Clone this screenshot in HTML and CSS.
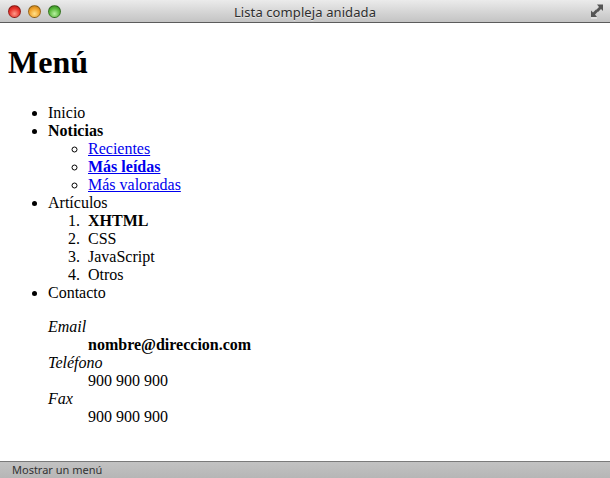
FILE: index.html
```html
<!DOCTYPE html>
<html lang="es">
<head>
<meta charset="utf-8">
<title>Lista compleja anidada</title>
<link rel="stylesheet" href="styles.css">
</head>
<body>
<div class="window">
  <div class="titlebar">
    <div class="lights">
      <span class="light red"></span>
      <span class="light yellow"></span>
      <span class="light green"></span>
    </div>
    <div class="title">Lista compleja anidada</div>
    <svg class="resize" width="14" height="16" viewBox="0 0 14 16">
      <path d="M13 1.5 L13 8 L11 6 L8 9 L6 7 L9 4 L7 1.5 Z" fill="#555"/>
      <path d="M1 14 L1 7.5 L3 9.5 L6 6.5 L8 8.5 L5 11.5 L7 14 Z" fill="#555"/>
      <path d="M1 15 L7 15" stroke="#f4f4f4" stroke-width="1"/>
    </svg>
  </div>
  <div class="content">
    <div class="page">
      <h1>Menú</h1>
      <ul>
        <li>Inicio</li>
        <li><strong>Noticias</strong>
          <ul>
            <li><a href="#">Recientes</a></li>
            <li><a href="#"><strong>Más leídas</strong></a></li>
            <li><a href="#">Más valoradas</a></li>
          </ul>
        </li>
        <li>Artículos
          <ol>
            <li><strong>XHTML</strong></li>
            <li>CSS</li>
            <li>JavaScript</li>
            <li>Otros</li>
          </ol>
        </li>
        <li>Contacto
          <dl>
            <dt><em>Email</em></dt>
            <dd><strong>nombre@direccion.com</strong></dd>
            <dt><em>Teléfono</em></dt>
            <dd>900 900 900</dd>
            <dt><em>Fax</em></dt>
            <dd>900 900 900</dd>
          </dl>
        </li>
      </ul>
    </div>
  </div>
  <div class="statusbar">Mostrar un menú</div>
</div>
</body>
</html>
```
FILE: styles.css
```css
html, body {
  margin: 0;
  padding: 0;
}
body {
  width: 610px;
  height: 478px;
  overflow: hidden;
}
.window {
  display: flex;
  flex-direction: column;
  width: 610px;
  height: 478px;
  background: #fff;
}
.titlebar {
  position: relative;
  flex: 0 0 22px;
  display: flex;
  align-items: center;
  justify-content: center;
  background: linear-gradient(#ebebeb, #d3d3d3 60%, #c4c4c4);
  border-bottom: 1px solid #5c5c5c;
}
.lights {
  position: absolute;
  left: 8px;
  top: 5px;
  display: flex;
  gap: 7px;
}
.light {
  width: 13px;
  height: 13px;
  border-radius: 50%;
  box-sizing: border-box;
  border: 1px solid rgba(0,0,0,0.35);
}
.red {
  background: radial-gradient(circle at 50% 70%, #ff9a8a 0, #e8322a 55%, #a8140e 100%);
}
.yellow {
  background: radial-gradient(circle at 50% 70%, #ffe08a 0, #f0a22a 55%, #b0700e 100%);
}
.green {
  background: radial-gradient(circle at 50% 70%, #b8f0a0 0, #58b83a 55%, #2a7818 100%);
}
.title {
  font-family: "Noto Sans", "DejaVu Sans", sans-serif;
  font-size: 13px;
  color: #2e2e2e;
  letter-spacing: 0.1px;
  text-shadow: 0 1px 0 rgba(255,255,255,0.5);
  margin-top: 1px;
}
.resize {
  position: absolute;
  right: 6px;
  top: 3px;
}
.content {
  flex: 1 1 auto;
  overflow: hidden;
  background: #fff;
}
.page {
  margin: 8px;
  font-family: "Liberation Serif", "Times New Roman", serif;
  font-size: 16px;
  color: #000;
}
.page h1 {
  font-size: 32px;
  margin: 21.44px 0 22.44px;
}
.page a {
  color: #0000ee;
}
.page ol li::marker {
  content: counter(list-item) ".\00a0\00a0";
}
.page dl {
  margin: 16px 0;
}
.page dd {
  margin-left: 40px;
}
.statusbar {
  flex: 0 0 16px;
  border-top: 1px solid #7a7a7a;
  background: linear-gradient(#c2c2c2, #b6b6b6);
  font-family: "Noto Sans", "DejaVu Sans", sans-serif;
  font-size: 11px;
  line-height: 16px;
  color: #333;
  padding-left: 12px;
}
```
